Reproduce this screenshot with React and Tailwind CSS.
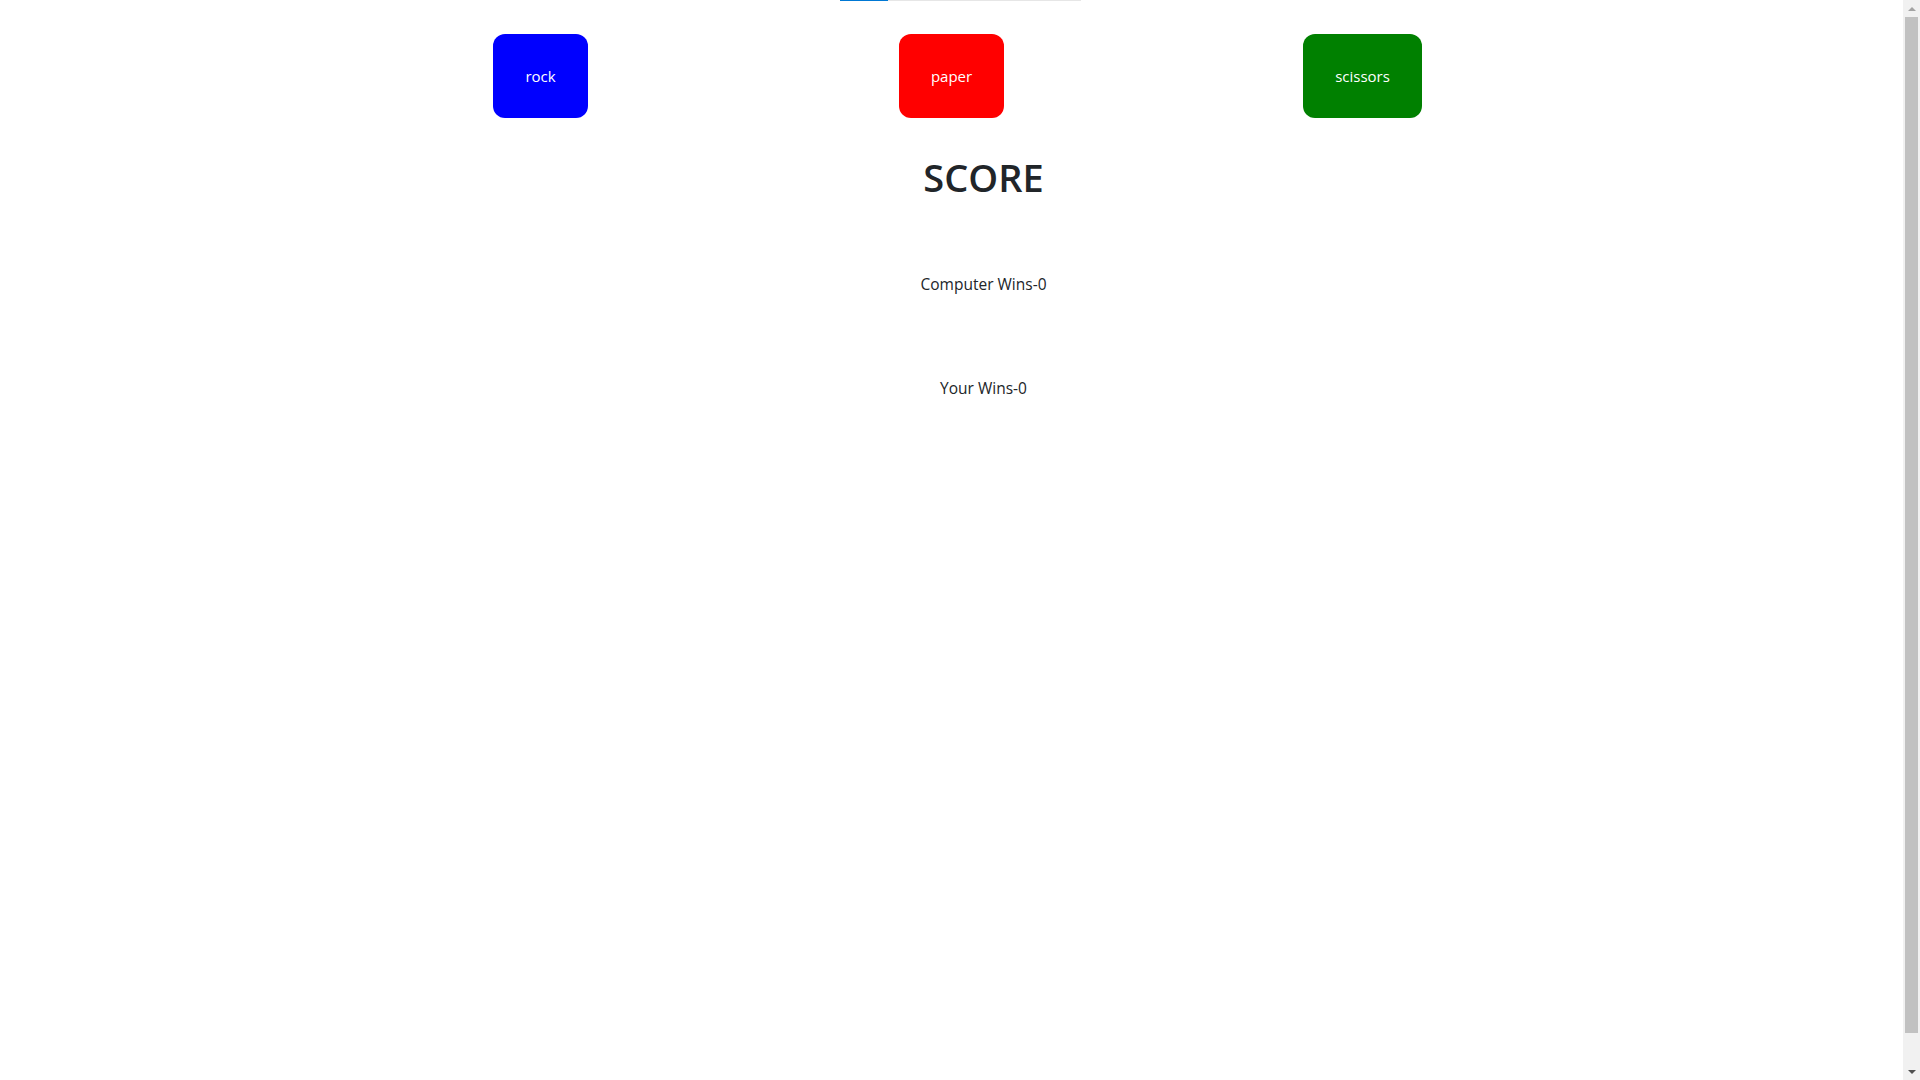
import React, { useState } from 'react';

const choices = [
    { name: 'rock', color: 'bg-[#0000ff]' },
    { name: 'paper', color: 'bg-[#ff0000]' },
    { name: 'scissors', color: 'bg-[#008000]' },
];

// browser scrollbar as it shows in the screenshot
const Scrollbar = () => (
    <div className="fixed top-0 right-0 w-[17px] h-screen bg-[#f1f1f1] flex flex-col items-center">
        <div className="h-[17px] flex items-center justify-center">
            <div className="w-0 h-0 border-l-[4px] border-r-[4px] border-b-[4px] border-l-transparent border-r-transparent border-b-[#a3a3a3]" />
        </div>
        <div className="w-[13px] h-[1016px] bg-[#c1c1c1]" />
        <div className="flex-1" />
        <div className="h-[17px] flex items-center justify-center">
            <div className="w-0 h-0 border-l-[4px] border-r-[4px] border-t-[4px] border-l-transparent border-r-transparent border-t-[#505050]" />
        </div>
    </div>
);

const App = () => {
    const [computerWins, setComputerWins] = useState(0);
    const [yourWins, setYourWins] = useState(0);

    // pick a random move for the computer and compare
    const play = (pick) => {
        const names = choices.map(c => c.name);
        const cpu = names[Math.floor(Math.random() * 3)];
        if (cpu === pick) return;
        const beats = { rock: 'scissors', paper: 'rock', scissors: 'paper' };
        if (beats[pick] === cpu) setYourWins(yourWins + 1);
        else setComputerWins(computerWins + 1);
    };

    return (
        <div className="min-h-[1112px] bg-white text-[#212529] font-['Open_Sans','Noto_Sans',sans-serif]">
            {/* thin loading bar at the very top */}
            <div className="fixed top-0 left-[840px] w-[241px] h-px bg-[#e6e6e6]">
                <div className="w-[48px] h-px bg-[#0078d4]" />
            </div>

            <div className="mr-[17px]">
                <div className="w-[1233px] mx-auto grid grid-cols-3 justify-items-center pt-[34px]">
                    {choices.map(c => (
                        <button
                            key={c.name}
                            onClick={() => play(c.name)}
                            className={`${c.color} text-white text-[15px] leading-5 px-8 py-8 rounded-xl`}
                        >
                            {c.name}
                        </button>
                    ))}
                </div>

                {/* score list */}
                <ul className="flex flex-col items-center pl-16">
                    <li><h1 className="mt-[35px] text-[38px] leading-[48px] font-semibold">SCORE</h1></li>
                    <li className="mt-[71px] text-[15.5px] leading-6">Computer Wins-{computerWins}</li>
                    <li className="mt-[80px] text-[15.5px] leading-6">Your Wins-{yourWins}</li>
                </ul>
            </div>

            <Scrollbar />
        </div>
    );
};

export default App;
